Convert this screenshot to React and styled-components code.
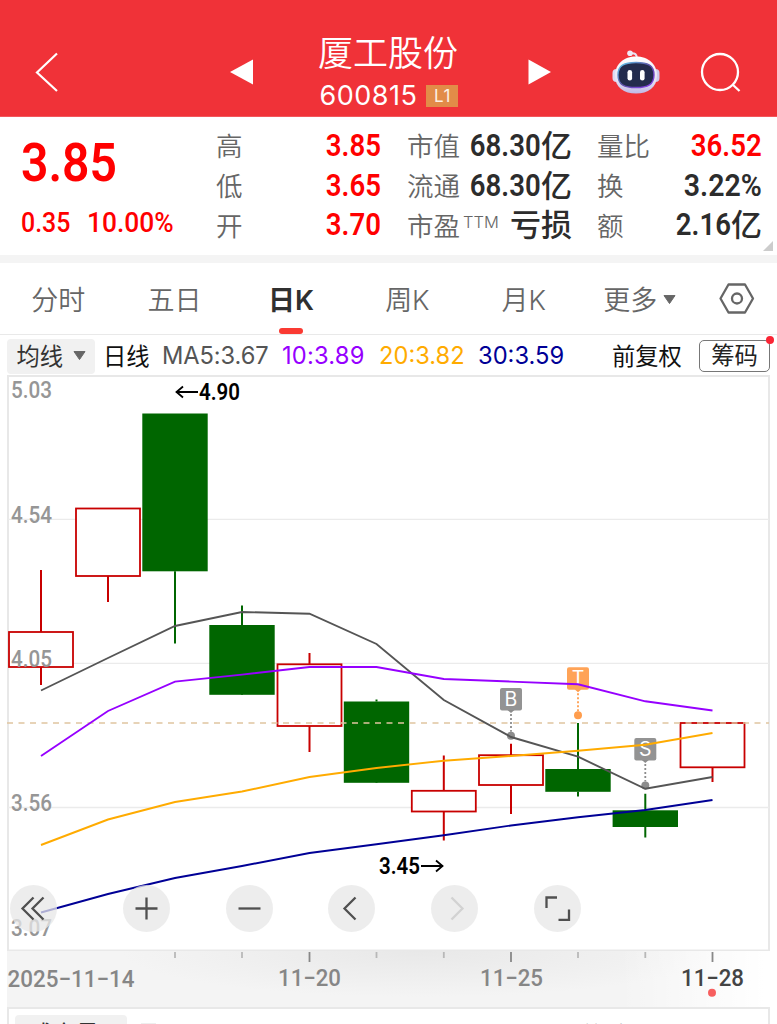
import React from "react";
import styled, { createGlobalStyle } from "styled-components";

const GlobalStyle = createGlobalStyle`
  * {
    box-sizing: border-box;
  }

  body {
    margin: 0;
    background: #fff;
    font-family: "Liberation Sans", "Noto Sans CJK SC", sans-serif;
    color: #333;
  }
`;

const Page = styled.div`
  width: 777px;
  height: 1024px;
  overflow: hidden;
  display: flex;
  flex-direction: column;
  background: #fff;

  svg {
    display: block;
    flex: none;
  }
`;

const Header = styled.header`
  height: 117px;
  padding: 28px 35px 0;
  display: flex;
  align-items: center;
  background: #f03238;
  border-bottom: 1px solid #f2575c;
`;

const Title = styled.div`
  width: 140px;
  margin: 1px 69px 0 64px;
  display: flex;
  flex-direction: column;
  align-items: center;
  color: #fff;

  h1 {
    margin: 0;
    font-family: "Noto Sans CJK SC", sans-serif;
    font-size: 35px;
    line-height: 42px;
    font-weight: 350;
    white-space: nowrap;
  }
`;

const Code = styled.div`
  display: flex;
  align-items: center;
  gap: 9px;
  height: 44px;
  padding: 5px 0 0 2px;
  font-family: Inter, sans-serif;
  font-size: 27px;
  letter-spacing: 0.5px;
  line-height: 42px;
  white-space: nowrap;
`;

const Level = styled.span`
  width: 32px;
  height: 22px;
  background: #e28c48;
  color: #fdf0e4;
  font-size: 17px;
  font-weight: 400;
  line-height: 22px;
  text-align: center;
`;

const HeaderIcons = styled.div`
  margin-left: 61px;
  padding-top: 2px;
  display: flex;
  align-items: center;
  gap: 40px;

  svg:first-child {
    margin-top: -2px;
  }
`;

const Quote = styled.section`
  height: 138px;
  display: grid;
  grid-template-columns: 216px 165px 191px 190px;
  padding: 9px 0 0;
`;

const Price = styled.div`
  padding-left: 21px;
  display: flex;
  flex-direction: column;
`;

// narrow digits, squeezed from the left or the right edge
const Num = styled.span`
  display: block;
  font-family: Roboto, "Noto Sans CJK SC", sans-serif;
  font-size: ${(p) => p.$size || 31}px;
  font-weight: ${(p) => p.$weight || 600};
  line-height: ${(p) => p.$line || 38}px;
  color: ${(p) => (p.$up ? "#ff0000" : "#2c2c2c")};
  white-space: nowrap;
  transform: scaleX(${(p) => p.$squeeze || 0.89});
  transform-origin: ${(p) => (p.$left ? "left" : "right")} center;
`;

const Change = styled.div`
  display: flex;
  margin-top: 7px;

  span:first-child {
    width: 66px;
  }
`;

const Column = styled.div`
  display: flex;
  flex-direction: column;
  padding-left: ${(p) => p.$indent || 0}px;
`;

const Cell = styled.div`
  height: 39.7px;
  display: flex;
  align-items: center;
  justify-content: space-between;
`;

const Label = styled.span`
  display: flex;
  margin-top: -1px;
  font-family: "Noto Sans CJK SC", sans-serif;
  font-size: 26.5px;
  font-weight: 350;
  line-height: 36px;
  color: #666;
  white-space: nowrap;

  sup {
    margin-left: 3px;
    font-family: Inter, sans-serif;
    font-size: 16.5px;
    font-weight: 300;
    line-height: 30px;
  }
`;

const CnValue = styled.span`
  margin-top: -4px;
  font-family: "Noto Sans CJK SC", sans-serif;
  font-size: 31px;
  font-weight: 500;
  line-height: 34px;
  color: #2c2c2c;
`;

const Amount = styled.span`
  display: flex;
  align-items: center;
`;

const Divider = styled.div`
  height: 8px;
  background: #f4f4f4;
`;

const CornerRow = styled.div`
  height: 0;
  display: flex;
  justify-content: flex-end;
  align-items: flex-end;
  padding-right: 4px;

  svg {
    margin-bottom: 4px;
  }
`;

const Tabs = styled.nav`
  height: 72px;
  display: flex;
  border-bottom: 1px solid #e9e9e9;
`;

const Tab = styled.div`
  width: 116.4px;
  flex: none;
  display: flex;
  flex-direction: column;
  align-items: center;
  font-family: Inter, "Noto Sans CJK SC", sans-serif;
  font-size: 27px;
  line-height: 37px;
  font-weight: ${(p) => (p.$active ? 600 : 350)};
  color: ${(p) => (p.$active ? "#303030" : "#666")};
  padding-top: 19px;

  &::after {
    content: "";
    width: 24px;
    height: 6px;
    margin-top: 9px;
    border-radius: 3px;
    background: ${(p) => (p.$active ? "#fa3a32" : "transparent")};
  }
`;

const More = styled.div`
  display: flex;
  align-items: center;
  gap: 6px;
  margin-left: -1px;

  svg {
    margin-top: -2px;
  }
`;

const Settings = styled.div`
  margin-left: 21px;
  padding-top: 18px;
`;

const Indicators = styled.div`
  height: 40px;
  padding: 2px 7px 0;
  display: flex;
  align-items: center;
  font-size: 23.3px;
  font-family: "Noto Sans CJK SC", sans-serif;
  line-height: 33px;
  white-space: nowrap;
`;

const Select = styled.div`
  width: 88px;
  height: 35px;
  flex: none;
  margin-right: 8px;
  border-radius: 4px;
  background: #f1f1f1;
  display: flex;
  align-items: center;
  justify-content: center;
  gap: 10px;
  color: #333;
`;

const Legend = styled.span`
  width: ${(p) => p.$w}px;
  flex: none;
  margin-top: -2px;
  color: ${(p) => p.$color};
`;

const MaValue = styled(Legend)`
  margin-top: -1px;
  font-family: Inter, sans-serif;
  font-size: 23.7px;
  letter-spacing: ${(p) => p.$spacing || 0}px;
`;

const ChipButton = styled.div`
  width: 71px;
  height: 32px;
  flex: none;
  border: 1.5px solid #777;
  border-radius: 5px;
  display: flex;
  align-items: center;
  justify-content: center;
  color: #222;
  position: relative;

  span {
    margin-top: -3px;
  }

  &::after {
    content: "";
    position: absolute;
    top: -5px;
    right: -5px;
    width: 8px;
    height: 8px;
    border-radius: 50%;
    background: #fa2434;
  }
`;

const ChartArea = styled.div`
  position: relative;
  height: 576px;
`;

const Toolbar = styled.div`
  position: absolute;
  left: 10px;
  top: 510px;
  display: flex;
  gap: 55.8px;

  div:first-child {
    margin-right: 10px;
  }
`;

const RoundButton = styled.div`
  width: 47px;
  height: 47px;
  border-radius: 50%;
  background: rgba(231, 231, 231, 0.75);

  svg path {
    fill: none;
    stroke: ${(p) => (p.$disabled ? "#d2d2d2" : "#505050")};
    stroke-width: 2.3;
  }
`;

const Axis = styled.div`
  height: 56px;
  padding-left: 7px;
  background: linear-gradient(to right, #fff 7px, transparent 7px),
    linear-gradient(to right, transparent 620px, #fff 765px),
    radial-gradient(ellipse 300px 46px at 420px 0, #e8e8e8, #f4f4f4);
`;

const Volume = styled.div`
  height: 17px;
  margin: 0 7px;
  border: solid #e8e8e8;
  border-width: 2px 2px 0;
  padding: 6px 6px 0;
  display: flex;
  overflow: hidden;
`;

const VolumeTag = styled.div`
  width: 112px;
  height: 35px;
  flex: none;
  border-radius: 4px;
  background: #f1f1f1;
  padding: 1px 0 0 15px;
  font: 23px/33px "Noto Sans CJK SC", sans-serif;
  color: #333;
`;

const VolumeChip = styled.div`
  width: 15px;
  height: 15px;
  flex: none;
  margin: 8px 0 0 14px;
  background: #eee;
`;

const VolumeText = styled.div`
  margin-left: 424px;
  padding-top: 2px;
  font: 23px/33px "Noto Sans CJK SC", sans-serif;
  color: #777;
`;

const candles = [
  { x: 41, top: 632, bottom: 667, high: 570, low: 685, up: true },
  { x: 108, top: 508.5, bottom: 576, high: 508.5, low: 602, up: true },
  { x: 175, top: 413.5, bottom: 571.3, high: 413.5, low: 643.5 },
  { x: 242, top: 625, bottom: 694.8, high: 605.5, low: 694 },
  { x: 309.5, top: 664.3, bottom: 726, high: 653, low: 752, up: true },
  { x: 376.5, top: 701.5, bottom: 782.8, high: 699.5, low: 782 },
  { x: 443.8, top: 790.8, bottom: 811.5, high: 755.5, low: 840.5, up: true },
  { x: 511, top: 755.2, bottom: 785, high: 743.7, low: 814, up: true },
  { x: 578, top: 769, bottom: 791.8, high: 723, low: 796.5 },
  { x: 645.3, top: 810.3, bottom: 827, high: 793.7, low: 837.5 },
  { x: 712.5, top: 723, bottom: 767.3, high: 723, low: 782, up: true },
];

const averages = [
  { color: "#555", ys: [690.5, 658, 626, 612, 613.7, 644, 700, 737, 756.7, 788.8, 777] },
  { color: "#9600ff", ys: [756, 711, 681.6, 674.6, 667, 667, 679, 681.6, 684.3, 701.3, 710.5] },
  { color: "#ffab00", ys: [845, 819.5, 802, 791.5, 777, 768, 760.7, 756, 750.7, 744.7, 733] },
  { color: "#000096", ys: [912.5, 894, 878, 866, 853, 844.3, 835.3, 825.5, 817.3, 810, 800] },
];

const gridLabels = [
  ["5.03", 398],
  ["4.54", 522.5],
  ["4.05", 666.7],
  ["3.56", 811],
  ["3.07", 935.5],
];

const marks = [
  { text: "B", x: 511, y: 688, dot: 735.7, color: "#8c8c8c" },
  { text: "T", x: 578, y: 667.3, dot: 715.3, color: "#ff9d4d" },
  { text: "S", x: 645.3, y: 738, dot: 785.5, color: "#8c8c8c" },
];

const Caret = ({ size = 13, color = "#666" }) => (
  <svg width={size} height={size * 0.7} viewBox="0 0 13 9">
    <path d="M1 .5h11L6.5 8.5z" fill={color} stroke={color} strokeLinejoin="round" />
  </svg>
);

const Robot = () => (
  <svg width="48" height="45" viewBox="0 0 48 45">
    <defs>
      <linearGradient id="shell" x1="0" y1="0" x2="0" y2="1">
        <stop offset="0" stopColor="#fff" />
        <stop offset="0.65" stopColor="#e6e2f4" />
        <stop offset="1" stopColor="#bfb8e6" />
      </linearGradient>
      <linearGradient id="rim" x1="0" y1="0" x2="1" y2="1">
        <stop offset="0" stopColor="#62cff0" />
        <stop offset="0.5" stopColor="#5c50a8" />
        <stop offset="1" stopColor="#8a3df0" />
      </linearGradient>
    </defs>
    <path d="M18 3.5c5-1 7 1 7 5" fill="none" stroke="#e8e2f2" strokeWidth="2" />
    <circle cx="18" cy="3.3" r="2.8" fill="#eeeaf7" />
    <rect x="0.5" y="19" width="8" height="13" rx="4" fill="#dedaf2" />
    <rect x="39.5" y="19" width="8" height="13" rx="4" fill="#cfcbee" />
    <path
      d="M24 6.500C12 6.500 3 14 3 25.500c0 12 9 18 21 18s21-6 21-18C45 14 36 6.500 24 6.500z"
      fill="url(#shell)"
    />
    <path
      d="M24 12.500c12 0 18 3 18 12.500s-6 12.500-18 12.500S6 34.500 6 25s6-12.500 18-12.500z"
      fill="#232b4d"
      stroke="url(#rim)"
      strokeWidth="1.4"
    />
    <rect x="15.5" y="20" width="4.6" height="10.5" rx="2.3" fill="#fff" />
    <rect x="28" y="20" width="4.6" height="10.5" rx="2.3" fill="#fff" />
  </svg>
);

const Chart = () => (
  <svg
    width="777"
    height="576"
    viewBox="0 375 777 576"
    fontFamily="Roboto, sans-serif"
  >
    <rect x="8" y="376" width="761" height="574.5" fill="none" stroke="#e8e8e8" strokeWidth="2" />
    {[519.3, 663.3, 807.5].map((y) => (
      <path key={y} d={`M8 ${y}H769`} stroke="#ebebeb" strokeWidth="1.3" />
    ))}
    {candles.map((c) => {
      const color = c.up ? "#c80000" : "#006600";
      return (
        <g key={c.x} stroke={color} strokeWidth="2">
          <path d={`M${c.x} ${c.high}V${c.top}M${c.x} ${c.bottom}V${c.low}`} />
          {c.up ? (
            <rect x={c.x - 32} y={c.top} width="64" height={c.bottom - c.top} fill="#fff" strokeWidth="1.8" />
          ) : (
            <rect x={c.x - 32.7} y={c.top} width="65.4" height={c.bottom - c.top} fill={color} stroke="none" />
          )}
        </g>
      );
    })}
    <path d="M7 723H769" stroke="#dfc5a0" strokeWidth="1.4" strokeDasharray="6 5.5" />
    {marks.map((m) => (
      <g key={m.text} fill={m.color}>
        <rect x={m.x - 11} y={m.y} width="22" height="22.5" rx="2" opacity="0.94" />
        <path d={`M${m.x - 3.5} ${m.y + 22}h7l-3.5 3z`} />
        <path
          d={`M${m.x} ${m.y + 26}V${m.dot - 4}`}
          stroke={m.color}
          strokeWidth="1.8"
          strokeDasharray="2 2"
        />
        <circle cx={m.x} cy={m.dot} r="4" />
        <text
          x={m.x}
          y={m.y + 18}
          fill="#fff"
          fontFamily="Inter, sans-serif"
          fontSize="19.5"
          textAnchor="middle"
        >
          {m.text}
        </text>
      </g>
    ))}
    {averages.map((a) => (
      <polyline
        key={a.color}
        points={a.ys.map((y, i) => `${candles[i].x},${y}`).join(" ")}
        fill="none"
        stroke={a.color}
        strokeWidth="1.9"
      />
    ))}
    {gridLabels.map(([text, y]) => (
      <text
        key={text}
        x="11"
        y={y}
        fill="#969696"
        fontSize="24"
        fontWeight="500"
        textLength="41"
        lengthAdjust="spacingAndGlyphs"
      >
        {text}
      </text>
    ))}
    <g fontSize="23" fontWeight="600" fill="#000">
      <text x="199" y="400" textLength="41" lengthAdjust="spacingAndGlyphs">
        4.90
      </text>
      <text x="379" y="874" textLength="41" lengthAdjust="spacingAndGlyphs">
        3.45
      </text>
    </g>
    <path
      d="M198 392H177M183 386.5l-6.5 5.5 6.5 5.5M421 866h21M436 860.5l6.5 5.5-6.5 5.5"
      fill="none"
      stroke="#000"
      strokeWidth="1.8"
    />
  </svg>
);

const DateAxis = () => (
  <Axis>
    <svg
      width="762"
      height="56"
      viewBox="7 951 762 56"
      fontFamily="Roboto, sans-serif"
      fontSize="24"
      fontWeight="500"
    >
      {candles.slice(2).map((c, i) => (
        <path
          key={c.x}
          d={`M${c.x} 952v${i % 3 === 2 ? 10 : 6}`}
          stroke={i % 3 === 2 ? "#888" : "#b8b8b8"}
          strokeWidth="1.8"
        />
      ))}
      <text x="7.5" y="986.5" fill="#868686" textLength="127" lengthAdjust="spacingAndGlyphs">
        2025−11−14
      </text>
      <text x="278" y="986" fill="#868686" textLength="63" lengthAdjust="spacingAndGlyphs">
        11−20
      </text>
      <text x="480" y="986" fill="#868686" textLength="63" lengthAdjust="spacingAndGlyphs">
        11−25
      </text>
      <text x="681" y="986" fill="#444" textLength="63" lengthAdjust="spacingAndGlyphs">
        11−28
      </text>
      <circle cx="712" cy="992.7" r="4" fill="#f75f5f" />
    </svg>
  </Axis>
);

const tools = [
  { id: "first", d: "M23.5 12.5 12.5 23.5l11 11M33.5 12.5l-11 11 11 11" },
  { id: "zoom-in", d: "M12.5 23.5h22M23.5 12.5v22" },
  { id: "zoom-out", d: "M12.5 23.5h22" },
  { id: "prev", d: "M27.5 12.5l-11 11 11 11" },
  { id: "next", d: "M20.5 12.5l11 11-11 11", disabled: true },
  { id: "full", d: "M12.5 23V12.5H23M35 24.5v10.3H24.5" },
];

const App = () => {
  return (
    <>
      <GlobalStyle />
      <Page>
        <Header>
          <svg width="24" height="40" viewBox="0 0 24 40">
            <path d="M22 1.5 2 20.5l20 18.5" fill="none" stroke="#fff" strokeWidth="2.2" />
          </svg>
          <svg width="24" height="26" viewBox="0 0 24 26" style={{ marginLeft: 171 }}>
            <path d="M0 13 23 .5v25z" fill="#fff" />
          </svg>
          <Title>
            <h1>厦工股份</h1>
            <Code>
              600815 <Level>L1</Level>
            </Code>
          </Title>
          <svg width="24" height="26" viewBox="0 0 24 26">
            <path d="M24 13 1.5.5v25z" fill="#fff" />
          </svg>
          <HeaderIcons>
            <Robot />
            <svg width="42" height="42" viewBox="0 0 42 42">
              <g fill="none" stroke="#fff" strokeWidth="2.3">
                <circle cx="20" cy="20" r="18" />
                <path d="M32.5 32.5l7 6.5" />
              </g>
            </svg>
          </HeaderIcons>
        </Header>

        <Quote>
          <Price>
            <Num $up $left $size={54} $line={74} $squeeze={0.89}>
              3.85
            </Num>
            <Change>
              <Num $up $left $size={28} $line={32} $weight={500}>
                0.35
              </Num>
              <Num $up $left $size={28} $line={32} $weight={500} $squeeze={0.94}>
                10.00%
              </Num>
            </Change>
          </Price>
          <Column>
            {[["高", "3.85"], ["低", "3.65"], ["开", "3.70"]].map(([label, value]) => (
              <Cell key={label}>
                <Label>{label}</Label>
                <Num $up>{value}</Num>
              </Cell>
            ))}
          </Column>
          <Column $indent={26}>
            {["市值", "流通"].map((label) => (
              <Cell key={label}>
                <Label>{label}</Label>
                <Amount>
                  <Num>68.30</Num>
                  <CnValue>亿</CnValue>
                </Amount>
              </Cell>
            ))}
            <Cell>
              <Label>
                市盈<sup>TTM</sup>
              </Label>
              <CnValue>亏损</CnValue>
            </Cell>
          </Column>
          <Column $indent={25}>
            <Cell>
              <Label>量比</Label>
              <Num $up>36.52</Num>
            </Cell>
            <Cell>
              <Label>换</Label>
              <Num $squeeze={0.92}>3.22%</Num>
            </Cell>
            <Cell>
              <Label>额</Label>
              <Amount>
                <Num>2.16</Num>
                <CnValue>亿</CnValue>
              </Amount>
            </Cell>
          </Column>
        </Quote>
        <CornerRow>
          <svg width="10" height="10" viewBox="0 0 10 10">
            <path d="M10 0v10H0z" fill="#ccc" />
          </svg>
        </CornerRow>
        <Divider />

        <Tabs>
          <Tab>分时</Tab>
          <Tab>五日</Tab>
          <Tab $active>日K</Tab>
          <Tab>周K</Tab>
          <Tab>月K</Tab>
          <Tab>
            <More>
              更多
              <Caret />
            </More>
          </Tab>
          <Settings>
            <svg width="36" height="34" viewBox="0 0 36 34">
              <g fill="none" stroke="#666" strokeWidth="2.3" strokeLinejoin="round">
                <path d="M9.5 3.5h16.500L34 17.500l-8 14H9.500l-8-14z" />
                <circle cx="18" cy="17.5" r="5" />
              </g>
            </svg>
          </Settings>
        </Tabs>

        <Indicators>
          <Select>
            <Legend $w={46} $color="#333">均线</Legend>
            <Caret />
          </Select>
          <Legend $w={59} $color="#111">日线</Legend>
          <MaValue $w={120} $color="#555" $spacing={-0.1}>MA5:3.67</MaValue>
          <MaValue $w={97} $color="#9600ff" $spacing={0.2}>10:3.89</MaValue>
          <MaValue $w={99} $color="#ffab00">20:3.82</MaValue>
          <MaValue $w={134} $color="#000096">30:3.59</MaValue>
          <Legend $w={87} $color="#111">前复权</Legend>
          <ChipButton>
            <span>筹码</span>
          </ChipButton>
        </Indicators>

        <ChartArea>
          <Chart />
          <Toolbar>
            {tools.map((t) => (
              <RoundButton key={t.id} $disabled={t.disabled}>
                <svg width="47" height="47" viewBox="0 0 47 47">
                  <path d={t.d} />
                </svg>
              </RoundButton>
            ))}
          </Toolbar>
        </ChartArea>

        <DateAxis />
        <Volume>
          <VolumeTag>成交量</VolumeTag>
          <VolumeChip />
          <VolumeText>总手</VolumeText>
        </Volume>
      </Page>
    </>
  );
};

export default App;
